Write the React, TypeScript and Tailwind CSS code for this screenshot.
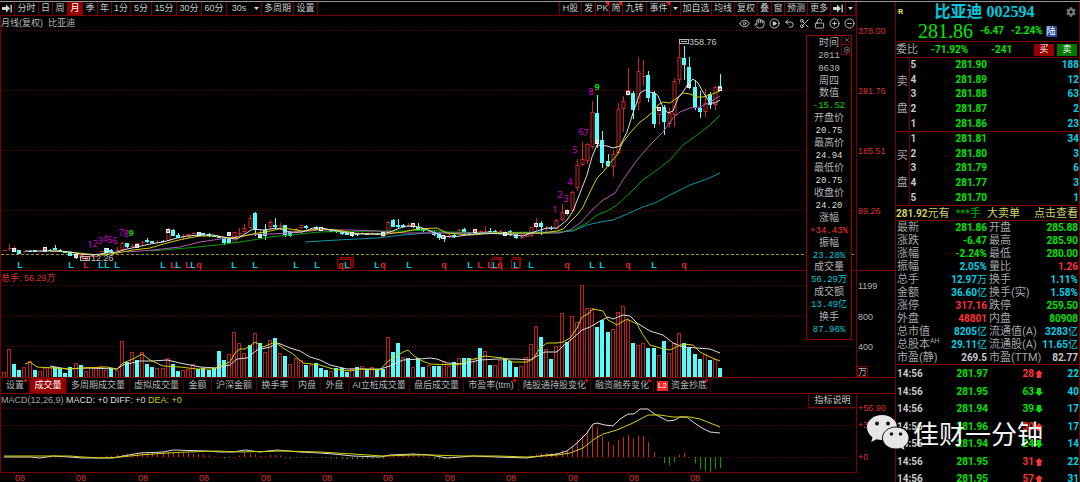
import type { ReactNode } from "react";
import { CircleMinus, CirclePlay, CirclePlus, Eye, Hand, LockOpen, Scissors, Settings, Undo2, X } from "lucide-react";
import { FaCog } from "react-icons/fa";

const STEP = 5.115;
const barX = (i: number) => 4 + STEP * i;

// [direction, high, body top, body bottom, low]
type Candle = [1 | -1, number, number, number, number];

const CANDLES: Candle[] = [
  [1, 250, 250, 252, 252], [1, 244, 248, 249, 251], [1, 246, 248, 252, 252], [-1, 250, 250, 254, 254],
  [1, 251, 251, 253, 254], [-1, 250, 251, 252, 252], [-1, 250, 250, 252, 252], [1, 250, 251, 252, 252],
  [-1, 247, 248, 252, 252], [-1, 249, 250, 251, 251], [-1, 245, 248, 250, 250], [-1, 249, 250, 251, 252],
  [-1, 251, 251, 253, 253], [-1, 252, 252, 256, 256], [-1, 254, 254, 258, 259], [1, 255, 255, 258, 258],
  [1, 256, 257, 260, 260], [1, 255, 256, 258, 258], [1, 254, 254, 257, 257], [1, 251, 251, 253, 254],
  [-1, 248, 248, 253, 253], [-1, 249, 250, 252, 252], [1, 247, 250, 252, 253], [1, 242, 243, 250, 251],
  [-1, 243, 243, 247, 248], [1, 244, 246, 247, 248], [1, 243, 243, 247, 247], [1, 241, 242, 243, 246],
  [-1, 238, 240, 242, 243], [-1, 241, 241, 243, 243], [1, 240, 242, 243, 243], [-1, 240, 241, 242, 242],
  [1, 228, 229, 241, 241], [-1, 229, 230, 236, 236], [-1, 233, 235, 238, 238], [1, 234, 236, 237, 240],
  [1, 234, 234, 237, 238], [1, 232, 233, 235, 236], [1, 232, 232, 236, 236], [-1, 233, 233, 235, 236],
  [-1, 233, 234, 236, 237], [-1, 235, 236, 237, 237], [-1, 236, 236, 238, 238], [-1, 238, 238, 243, 245],
  [-1, 238, 239, 243, 243], [1, 232, 232, 243, 243], [1, 228, 233, 234, 236], [1, 224, 228, 232, 233],
  [1, 215, 218, 228, 229], [-1, 212, 213, 230, 236], [1, 229, 232, 233, 239], [-1, 224, 230, 236, 240],
  [1, 220, 222, 227, 228], [-1, 218, 225, 227, 229], [1, 223, 226, 227, 229], [-1, 225, 225, 236, 237],
  [-1, 231, 232, 236, 237], [1, 228, 229, 233, 233], [1, 225, 225, 228, 229], [-1, 225, 226, 228, 229],
  [1, 228, 229, 230, 230], [-1, 226, 227, 229, 229], [-1, 227, 227, 230, 231], [1, 229, 229, 232, 232],
  [-1, 229, 230, 232, 232], [-1, 230, 231, 232, 233], [-1, 230, 231, 234, 235], [-1, 231, 232, 235, 235],
  [-1, 232, 233, 236, 237], [-1, 233, 233, 235, 236], [1, 232, 233, 234, 234], [-1, 233, 233, 235, 235],
  [1, 232, 233, 234, 235], [-1, 233, 234, 235, 235], [1, 233, 233, 237, 237], [1, 221, 222, 233, 233],
  [-1, 219, 220, 227, 227], [-1, 219, 225, 227, 228], [-1, 224, 225, 227, 227], [1, 223, 225, 226, 227],
  [-1, 223, 224, 227, 228], [-1, 223, 227, 230, 231], [-1, 228, 229, 231, 232], [1, 230, 231, 232, 232],
  [-1, 231, 232, 235, 236], [-1, 232, 233, 238, 240], [-1, 235, 236, 239, 242], [1, 234, 235, 237, 238],
  [-1, 234, 235, 237, 238], [1, 229, 230, 233, 234], [-1, 228, 229, 233, 234], [-1, 232, 233, 234, 234],
  [-1, 229, 231, 233, 234], [1, 230, 231, 232, 233], [1, 226, 231, 232, 233], [-1, 228, 231, 233, 233],
  [-1, 230, 231, 232, 233], [1, 230, 231, 234, 234], [1, 231, 232, 235, 236], [-1, 230, 231, 235, 236],
  [-1, 234, 234, 238, 239], [1, 235, 237, 238, 239], [1, 235, 236, 238, 238], [1, 227, 227, 236, 237],
  [1, 218, 223, 227, 230], [-1, 221, 223, 227, 235], [1, 226, 228, 229, 232], [-1, 226, 228, 229, 230],
  [1, 219, 220, 229, 229], [1, 204, 212, 220, 221], [1, 209, 210, 214, 216], [1, 191, 192, 211, 212],
  [1, 159, 165, 188, 191], [1, 142, 159, 165, 166], [1, 143, 144, 161, 164], [1, 101, 112, 147, 149],
  [-1, 95, 113, 143, 148], [-1, 131, 140, 163, 168], [-1, 154, 161, 166, 167], [1, 150, 154, 167, 177],
  [1, 103, 109, 153, 154], [1, 96, 101, 109, 132], [1, 68, 90, 95, 96], [-1, 91, 93, 110, 119],
  [1, 57, 71, 103, 110], [1, 60, 76, 77, 86], [-1, 71, 75, 98, 102], [-1, 91, 93, 124, 128],
  [1, 107, 110, 115, 125], [-1, 105, 107, 122, 135], [1, 108, 113, 124, 128], [1, 78, 81, 115, 127],
  [1, 42, 57, 80, 84], [-1, 46, 58, 65, 80], [-1, 57, 67, 87, 89], [-1, 80, 87, 108, 110],
  [-1, 91, 108, 112, 118], [1, 89, 103, 112, 117], [-1, 92, 94, 105, 109], [1, 86, 87, 105, 110],
  [-1, 74, 86, 91, 91],
];

// Negative values close down
const VOLUMES = [
  14, 83, -40, -22, 30, 48, -22, 18, 27, 30, -31, -27, -13, -31, 42, -35, 18, 29, 31, 33, 21, -28, 21, 107, -45, 74,
  -52, 76, -40, -29, 28, 26, 57, -39, -18, 22, 24, 39, -24, -26, -20, -28, -78, -51, 70, 135, 102, 72, -96, 132, -101,
  75, 111, -117, 72, -62, 39, 56, 52, -35, 37, -43, -28, -22, 18, -26, -28, -16, 28, -31, 33, -24, 29, -24, -24, 120,
  -76, -102, 59, -58, 30, -56, -31, 37, -32, -34, 48, 34, -44, 58, -56, -58, 54, -86, 78, -37, 36, 52, -58, -48, -29,
  33, 60, 100, 153, -121, 84, -55, 94, 192, -104, 182, 164, 276, 206, 206, -149, -171, -134, 144, 195, 213, 172,
  -103, 97, 101, -86, -87, 66, -108, 72, 102, 132, -103, -87, -68, -55, 68, -51, 54, -27,
];

const MACD_BARS = [
  0, 2, 1, 0, -1, 0, 0, 0, 0, 2, 3, 2, 0, -2, -3, -3, -2, -2, -1, 2, 4, 4, 6, 9, 10, 10, 12, 14, 14, 14, 15, 14, 15, 15,
  14, 14, 12, 10, 9, 8, 5, 2, -2, -5, -3, -2, 5, 12, 10, 8, 3, 2, 7, 6, 5, -3, -5, -3, -2, -2, -2, -2, -2, -3, -4, -5,
  -7, -7, -7, -7, -6, -5, -5, -4, -5, 2, 4, 5, 6, 7, 8, 5, 3, -2, -6, -7, -7, -6, -5, -2, -1, 1, 2, 2, -2, 2, 1, 2,
  -2, -2, -3, -2, 2, 5, 9, 11, 12, 10, 14, 20, 22, 32, 52, 66, 80, 96, 89, 62, 46, 35, 52, 60, 66, 56, 64, 64, 45, 15,
  -2, -18, -26, -15, 7, 12, -2, -20, -36, -41, -44, -36, -34,
];

const MA5 =
  "25,251 43,251 60,251 70,252 80,254 93,255 107,253 117,252 127,249 137,247 150,244 163,242 177,238 187,236 200,235 213,235 227,238 237,239 243,235 253,229 263,230 277,228 290,232 302,232 313,228 322,228 337,231 350,234 370,234 382,234 390,232 400,228 408,226 420,227 433,232 443,236 453,237 467,235 483,233 503,234 523,236 537,231 547,228 557,228 567,220 573,211 580,193 587,175 592,157 597,145 607,146 613,148 620,146 627,132 633,113 640,93 645,90 650,92 655,93 658,96 663,107 668,113 673,111 678,98 683,92 688,84 693,79 698,83 703,92 710,103 715,103 720,100";
const MA10 =
  "50,251 70,252 87,254 103,255 117,253 133,250 150,248 167,243 183,239 200,236 217,236 230,238 240,237 253,234 270,231 283,228 303,231 320,229 337,230 353,233 370,234 387,234 403,232 417,229 437,228 447,233 470,235 497,233 520,233 543,233 557,231 563,229 570,222 577,215 583,207 590,192 597,178 603,172 610,163 617,155 623,142 630,133 640,122 647,117 655,110 658,105 663,102 670,103 677,98 683,93 690,94 697,97 703,97 710,95 720,91";
const MA20 =
  "127,252 153,250 180,247 200,242 227,238 247,235 270,234 290,233 320,230 350,230 377,231 403,233 427,233 457,233 487,233 523,234 547,233 560,233 570,230 580,223 592,210 603,200 615,193 623,180 637,160 650,145 663,132 673,118 680,112 690,108 700,107 710,102 720,96";
const MA30 =
  "150,251 187,248 217,245 247,241 270,237 290,235 320,232 377,231 403,231 427,230 450,232 503,233 553,233 573,230 587,223 597,215 607,211 617,205 630,193 643,180 657,170 670,160 683,145 697,135 710,125 720,115";
const MA60 =
  "305,242 337,240 377,238 403,235 427,233 560,232 573,231 587,225 600,222 613,220 627,214 643,207 657,202 670,195 690,185 707,179 720,173";

const VOL_MA5 =
  "25,364 30,362 37,367 53,368 70,369 80,368 107,367 117,369 123,363 133,359 142,354 150,360 163,366 180,367 197,369 213,369 220,366 230,362 235,353 240,349 245,349 250,346 255,342 263,347 275,342 283,348 293,354 303,363 320,365 333,369 350,371 360,369 380,370 387,362 395,357 403,352 408,350 413,355 420,360 430,364 457,365 470,360 485,356 503,358 513,362 527,362 533,359 540,348 547,343 557,343 563,342 570,338 577,328 582,317 588,314 593,309 603,311 608,320 617,325 627,319 637,324 643,335 650,345 660,348 670,350 683,344 693,345 700,352 710,357 720,361";
const VOL_MA10 =
  "50,366 67,369 87,368 117,369 123,365 140,361 153,361 167,360 180,363 200,367 217,368 230,365 237,359 247,358 257,350 270,347 278,343 290,348 300,351 310,357 320,360 330,365 347,369 380,369 390,366 403,360 420,359 430,358 437,359 447,363 463,364 480,360 497,359 517,359 530,360 537,356 545,352 557,352 563,346 573,338 582,330 590,327 600,321 608,317 613,319 623,315 630,316 637,323 650,331 663,335 673,343 683,347 697,348 710,349 720,353";

const DIFF =
  "4,457 30,457 40,458 53,456 70,457 82,458 93,458 113,458 123,456 140,453 163,452 173,450 207,451 220,452 233,452 245,450 260,452 277,450 300,452 320,453 333,454 353,456 380,457 390,455 413,454 430,455 447,458 473,456 497,457 527,458 547,455 557,454 567,451 577,443 587,433 593,424 597,423 605,425 613,426 620,419 628,414 634,414 640,409 648,409 653,413 660,417 668,421 675,420 680,417 687,417 693,422 702,428 710,432 720,433";
const DEA =
  "4,456 70,456 83,457 103,458 120,457 140,455 167,453 187,452 217,451 240,452 283,451 320,452 353,454 383,456 413,455 430,455 463,456 497,456 527,457 557,455 570,453 583,448 593,440 603,434 617,430 633,423 648,415 660,415 673,417 690,417 700,419 710,423 720,427";

const MARKS: [number, "L" | "q", "c" | "r"][] = [
  [20, "L", "c"], [71, "L", "c"], [86, "L", "r"], [101, "L", "c"], [107, "L", "c"], [117, "L", "c"],
  [163, "L", "c"], [173, "L", "r"], [178, "L", "c"], [188, "L", "r"], [193, "L", "c"], [199, "q", "r"],
  [234, "L", "c"], [255, "L", "c"], [296, "L", "c"], [317, "L", "c"], [341, "q", "r"], [347, "L", "c"],
  [377, "L", "c"], [383, "q", "r"], [409, "L", "c"], [444, "q", "r"], [470, "L", "c"], [480, "L", "r"],
  [490, "L", "r"], [495, "L", "c"], [500, "q", "r"], [516, "L", "c"], [531, "L", "c"], [567, "q", "r"],
  [592, "L", "c"], [602, "L", "c"], [628, "q", "r"], [654, "L", "c"], [684, "q", "r"],
];

const COUNTS: [number, number, number][] = [
  [1, 90, 248], [2, 95, 247], [3, 100, 244], [4, 105, 242], [5, 110, 243], [6, 115, 244], [7, 121, 236],
  [8, 126, 237], [9, 131, 236], [1, 555, 213], [2, 560, 198], [3, 566, 202], [4, 570, 185], [5, 575, 153],
  [6, 581, 135], [7, 586, 136], [8, 591, 95], [9, 597, 90],
];

const SQUARES: [number, number][] = [
  [14, 250], [45, 249], [76, 256], [107, 250], [137, 246], [168, 231], [199, 234], [229, 234], [260, 236],
  [321, 229], [352, 234], [383, 234], [413, 225], [443, 237], [475, 231], [505, 234], [536, 225], [567, 212],
  [597, 142], [628, 93], [659, 109], [689, 86], [720, 89],
];

const YEARS = Array.from({ length: 12 }, (_, i) => 15 + Math.round(61.4 * i));

const PERIODS = [
  { label: "分时", cls: "w-[24px]" },
  { label: "日", cls: "w-[14px]" },
  { label: "周", cls: "w-[15px]" },
  { label: "月", cls: "w-[15px] bg-[#960000] text-white" },
  { label: "季", cls: "w-[15px]" },
  { label: "年", cls: "w-[14px]" },
  { label: "1分", cls: "w-[19px]" },
  { label: "5分", cls: "w-[21px]" },
  { label: "15分", cls: "w-[25px]" },
  { label: "30分", cls: "w-[25px]" },
  { label: "60分", cls: "w-[25px]" },
  { label: "30s", cls: "w-[24px] border-r-0" },
  { label: "▾", cls: "w-[11px]" },
  { label: "多周期", cls: "w-[32px]" },
  { label: "设置", cls: "w-[24px]" },
];

const TOOLS = [
  { label: "H股", cls: "w-[22px]" },
  { label: "发", cls: "w-[14px]" },
  { label: "PK", cls: "w-[14px]", hot: true },
  { label: "简", cls: "w-[13px]", hot: true },
  { label: "九转", cls: "w-[24px]" },
  { label: "事件", cls: "w-[24px]", hot: true },
  { label: "▾", cls: "w-[10px]" },
  { label: "加自选", cls: "w-[31px]" },
  { label: "均线", cls: "w-[23px]" },
  { label: "复权", cls: "w-[23px]" },
  { label: "叠", cls: "w-[14px]" },
  { label: "窗", cls: "w-[13px]" },
  { label: "预测", cls: "w-[23px]" },
  { label: "更多", cls: "w-[23px]" },
  { label: "→", cls: "w-[15px]" },
  { label: "▾", cls: "w-[10px]" },
];

const INDICATORS = [
  { label: "设置", cls: "w-[29px]", dot: true },
  { label: "成交量", cls: "w-[37px] bg-[#960000] text-white" },
  { label: "多周期成交量", cls: "w-[63px]" },
  { label: "虚拟成交量", cls: "w-[54px]" },
  { label: "金额", cls: "w-[28px]" },
  { label: "沪深金额", cls: "w-[45px]" },
  { label: "换手率", cls: "w-[37px]" },
  { label: "内盘", cls: "w-[27px]" },
  { label: "外盘", cls: "w-[28px]" },
  { label: "AI立桩成交量", cls: "w-[61px]" },
  { label: "盘后成交量", cls: "w-[54px]" },
  { label: "市盈率(ttm)", cls: "w-[55px]", dot: true },
  { label: "陆股通持股变化", cls: "w-[72px]", dot: true },
  { label: "融资融券变化", cls: "w-[63px]", dot: true },
  { label: "资金抄底", cls: "w-[57px]", dot: true, level2: true },
];

const INFO: [string, string, string][] = [
  ["数值", "-15.52", "text-[#00dc00]"],
  ["开盘价", "20.75", "text-[#dcdcdc]"],
  ["最高价", "24.94", "text-[#dcdcdc]"],
  ["最低价", "20.75", "text-[#dcdcdc]"],
  ["收盘价", "24.20", "text-[#dcdcdc]"],
  ["涨幅", "+34.43%", "text-[#ff3232]"],
  ["振幅", "23.28%", "text-[#00c8dc]"],
  ["成交量", "56.29万", "text-[#00c8dc]"],
  ["成交额", "13.49亿", "text-[#00c8dc]"],
  ["换手", "87.96%", "text-[#00c8dc]"],
];

const ASKS: [number, string, number][] = [
  [5, "281.90", 188],
  [4, "281.89", 12],
  [3, "281.88", 63],
  [2, "281.87", 2],
  [1, "281.86", 23],
];

const BIDS: [number, string, number][] = [
  [1, "281.81", 34],
  [2, "281.80", 3],
  [3, "281.79", 6],
  [4, "281.77", 3],
  [5, "281.70", 1],
];

const GREEN = "text-[#00e600]";
const RED = "text-[#ff3232]";
const CYAN = "text-[#00d2e6]";
const GREY = "text-[#c8c8c8]";

const STATS: [string, string, string, string, string, string][] = [
  ["最新", "281.86", GREEN, "开盘", "285.88", GREEN],
  ["涨跌", "-6.47", GREEN, "最高", "285.90", GREEN],
  ["涨幅", "-2.24%", GREEN, "最低", "280.00", GREEN],
  ["振幅", "2.05%", CYAN, "量比", "1.26", RED],
  ["总手", "12.97万", CYAN, "换手", "1.11%", CYAN],
  ["金额", "36.60亿", CYAN, "换手(实)", "1.58%", CYAN],
  ["涨停", "317.16", RED, "跌停", "259.50", GREEN],
  ["外盘", "48801", RED, "内盘", "80908", GREEN],
  ["总市值", "8205亿", CYAN, "流通值(A)", "3283亿", CYAN],
  ["总股本", "29.11亿", CYAN, "流通股(A)", "11.65亿", CYAN],
  ["市盈(静)", "269.5", GREY, "市盈(TTM)", "82.77", GREY],
];

const TRADES: [string, string, number, boolean, number][] = [
  ["14:56", "281.97", 28, true, 22],
  ["14:56", "281.95", 63, false, 40],
  ["14:56", "281.94", 39, false, 17],
  ["14:56", "281.96", 30, true, 17],
  ["14:56", "281.94", 24, false, 14],
  ["14:56", "281.95", 31, true, 22],
  ["14:56", "281.95", 57, true, 31],
];

function JumpIcon() {
  return (
    <svg width="10" height="9" viewBox="0 0 10 9" fill="#d2d2d2">
      <path d="M0 3h4V0.5L8 4.5L4 8.5V6H0z M8.5 0.5h1.3v8H8.5z" />
    </svg>
  );
}

function BarButton({ label, cls, hot }: { label: string; cls: string; hot?: boolean }) {
  return (
    <button
      type="button"
      aria-label={label === "→" ? "前进" : label === "▾" ? "展开" : undefined}
      className={`relative flex h-full shrink-0 items-center justify-center border-r border-[#780000] whitespace-nowrap ${cls}`}
    >
      {label === "▾" ? (
        <svg width="5" height="3" viewBox="0 0 5 3">
          <path d="M0 0h5L2.5 3z" fill="#d2d2d2" />
        </svg>
      ) : label === "→" ? (
        <JumpIcon />
      ) : (
        label
      )}
      {hot && (
        <svg className="absolute top-0 right-0" width="4" height="4" viewBox="0 0 4 4">
          <path d="M0 0h4v4z" fill="#ff1e1e" />
        </svg>
      )}
    </button>
  );
}

function Toolbar() {
  return (
    <div className="mr-[38px] flex h-[14px] border-r border-b border-[#780000] text-[9px] leading-none text-[#c8c8c8]">
      <BarButton label="→" cls="w-[15px]" />
      {PERIODS.map((p) => (
        <BarButton key={p.label} {...p} />
      ))}
      <div className="flex-1 border-r border-[#780000]" />
      {TOOLS.map((t, i) => (
        <BarButton key={i} {...t} />
      ))}
    </div>
  );
}

function Grid({ rows }: { rows: number[] }) {
  return (
    <>
      {rows.map((y) => (
        <line key={y} x1="1" x2="100%" y1={y + 0.5} y2={y + 0.5} stroke="#6e0000" strokeDasharray="1 2" />
      ))}
    </>
  );
}

function Line({ points, color }: { points: string; color: string }) {
  return <polyline points={points} fill="none" stroke={color} strokeWidth="1" />;
}

function Pane({ top, children, axis }: { top: number; children: ReactNode; axis: ReactNode }) {
  return (
    <div className="flex h-full">
      <svg className="h-full min-w-0 flex-1 border-x border-[#780000]" role="img">
        <g transform={`translate(-1,${-top})`}>{children}</g>
      </svg>
      <svg className="h-full w-[38px] font-['Liberation_Sans','Noto_Sans_CJK_SC',sans-serif] text-[9px]">
        <g transform={`translate(0,${-top})`}>{axis}</g>
      </svg>
    </div>
  );
}

function PriceChart() {
  return (
    <Pane
      top={16}
      axis={
        <g fill="#dc3232">
          <text x="1" y="34">378.00</text>
          <text x="1" y="94">281.76</text>
          <text x="1" y="154">185.51</text>
          <text x="1" y="214">89.26</text>
        </g>
      }
    >
      <Grid rows={[30, 90, 150, 210]} />
      <line x1="1" x2="100%" y1="254.5" y2="254.5" stroke="#a0961e" strokeWidth="1" strokeDasharray="3 2" />
      {CANDLES.map(([dir, high, top, bottom, low], i) => {
        const x = Math.round(barX(i));
        const h = Math.max(bottom - top, 1);
        return dir > 0 ? (
          <g key={i} stroke="#c82828">
            <path d={`M${x + 0.5} ${high}V${top}M${x + 0.5} ${bottom}V${low}`} />
            {h > 2 ? (
              <rect x={x - 1} y={top + 0.5} width="3" height={h - 1} fill="#000" />
            ) : (
              <path d={`M${x - 1} ${top + 0.5}h4`} />
            )}
          </g>
        ) : (
          <g key={i} fill="#54fcfc">
            <rect x={x} y={high} width="1" height={low - high} />
            <rect x={x - 2} y={top} width="4" height={h} />
          </g>
        );
      })}
      <Line points={MA60} color="#0a96a5" />
      <Line points={MA30} color="#00a000" />
      <Line points={MA20} color="#b45ab4" />
      <Line points={MA10} color="#d2d200" />
      <Line points={MA5} color="#dcdcdc" />
      {SQUARES.map(([x, y]) => (
        <g key={x}>
          <rect x={x - 2} y={y - 2} width="4" height="4" fill="#f0f0f0" />
          <rect x={x - 1} y={y - 1} width="2" height="2" fill={y % 2 ? "#e66464" : "#96e6e6"} />
        </g>
      ))}

      <g className="font-['Noto_Sans',sans-serif] text-[9px]" textAnchor="middle">
        {COUNTS.map(([n, x, y]) => (
          <text key={x} x={x} y={y} fill={n === 9 ? "#00dc00" : "#d200d2"} fontWeight={n === 9 ? 700 : 400}>
            {n}
          </text>
        ))}
      </g>

      {/* high / low tags */}
      <g fill="none" stroke="#b4b4b4">
        <rect x="679.5" y="39.5" width="9" height="4" />
        <path d="M681 41.5h6" />
        <rect x="80.5" y="256.5" width="9" height="4" />
        <path d="M82 258.5h6" />
      </g>
      <g className="font-['Liberation_Sans',sans-serif] text-[9px]" fill="#c8c8c8">
        <text x="689" y="45">358.76</text>
        <text x="91" y="261">12.26</text>
      </g>

      <g fill="#500000" stroke="#a00000">
        <rect x="340.5" y="257.5" width="13" height="10" />
        <rect x="337.5" y="259.5" width="13" height="9" fill="#000" />
        <rect x="493.5" y="257.5" width="8" height="10" />
        <rect x="491.5" y="259.5" width="8" height="9" fill="#000" />
        <rect x="513.5" y="257.5" width="7" height="10" />
        <rect x="511.5" y="259.5" width="8" height="9" fill="#000" />
      </g>
      <g className="font-['Liberation_Sans',sans-serif] text-[9px] font-bold" textAnchor="middle">
        {MARKS.map(([x, t, c]) => (
          <text key={x} x={x} y="268" fill={c === "c" ? "#00c8dc" : "#dc2828"}>
            {t}
          </text>
        ))}
      </g>
    </Pane>
  );
}

function VolumeChart() {
  return (
    <Pane
      top={271}
      axis={
        <g fill="#b4b4b4">
          <text x="1" y="289">1199</text>
          <text x="1" y="320">800</text>
          <text x="1" y="350">400</text>
          <rect x="0.5" y="366.5" width="10" height="10" fill="none" stroke="#780000" />
          <text x="1" y="375">万</text>
        </g>
      }
    >
      <Grid rows={[285, 316, 346]} />
      {VOLUMES.map((v, i) => {
        const x = Math.round(barX(i));
        const h = Math.round(Math.abs(v) / 3);
        return v > 0 ? (
          <rect key={i} x={x - 1.5} y={377.5 - h} width="3" height={h} fill="#100" stroke="#b42323" />
        ) : (
          <rect key={i} x={x - 2} y={377 - h} width="4" height={h} fill="#54fcfc" />
        );
      })}
      <Line points={VOL_MA10} color="#dcdcdc" />
      <Line points={VOL_MA5} color="#d2d200" />
    </Pane>
  );
}

function MacdChart() {
  return (
    <Pane
      top={394}
      axis={
        <g fill="#dc3232">
          <text x="1" y="411">+56.90</text>
          <text x="1" y="428">+37.90</text>
          <text x="1" y="460">+0</text>
        </g>
      }
    >
      <Grid rows={[408, 425, 457]} />
      {MACD_BARS.map((v, i) => {
        const x = Math.round(barX(i));
        const h = Math.abs(v) / 3;
        return (
          <rect
            key={i}
            x={x}
            y={v > 0 ? 457 - h : 457}
            width="1"
            height={h}
            fill={v > 0 ? "#c82828" : "#00a000"}
          />
        );
      })}
      <Line points={DIFF} color="#dcdcdc" />
      <Line points={DEA} color="#d2d200" />
    </Pane>
  );
}

function ChartTools() {
  const icons: [string, typeof Eye, string][] = [
    ["显示", Eye, ""],
    ["拖动", Hand, ""],
    ["播放", CirclePlay, "[&>path]:fill-current"],
    ["撤销", Undo2, ""],
    ["剪切", Scissors, ""],
    ["锁定", LockOpen, ""],
    ["放大", CirclePlus, ""],
    ["缩小", CircleMinus, ""],
  ];
  return (
    <div className="absolute top-[2px] right-[38px] flex text-[#c8c8c8]">
      {icons.map(([name, Icon, cls]) => (
        <button key={name} type="button" aria-label={name} className="flex w-[15px] justify-center">
          <Icon size={11} strokeWidth={2} className={cls} />
        </button>
      ))}
    </div>
  );
}

function InfoPanel() {
  return (
    <div className="absolute top-[33px] right-[43px] w-[46px] border border-[#a00000] bg-black py-[2px] font-['Liberation_Mono','Noto_Sans_CJK_SC',monospace] text-[9px] leading-none">
      <div className="absolute top-0 right-0 border-b border-l border-[#780000] text-[#8c8c8c]">
        <button type="button" aria-label="关闭" className="flex size-[9px] items-center justify-center border-b border-[#780000]">
          <X size={8} />
        </button>
        <button type="button" aria-label="面板设置" className="flex size-[9px] items-center justify-center">
          <Settings size={8} />
        </button>
      </div>
      <dl className="grid h-[299px] grid-rows-[repeat(24,minmax(0,1fr))] items-center text-center whitespace-nowrap text-[#b4b4b4]">
        <dt className="text-[10px]">时间</dt>
        <dd>2011</dd>
        <dd>0630</dd>
        <dd className="text-[10px]">周四</dd>
        {INFO.map(([label, value, color]) => (
          <div key={label} className="contents">
            <dt className="text-[10px]">{label}</dt>
            <dd className={color}>{value}</dd>
          </div>
        ))}
      </dl>
    </div>
  );
}

function IndicatorTabs() {
  return (
    <div className="flex h-[16px] border-b border-l border-[#780000] text-[9px] leading-none text-[#b4b4b4]">
      {INDICATORS.map((t) => (
        <button
          key={t.label}
          type="button"
          className={`relative flex h-full shrink-0 items-center justify-center gap-[3px] border-r border-[#500000] whitespace-nowrap ${t.cls}`}
        >
          {t.level2 && <span className="bg-[#f02828] px-px py-px text-[8px] text-white">L2</span>}
          {t.label}
          {t.dot && <span className="absolute top-[1px] right-[2px] size-[3px] rounded-full bg-[#ff0000]" />}
        </button>
      ))}
    </div>
  );
}

function DateAxis() {
  return (
    <svg className="h-[12px] w-full font-['Liberation_Sans',sans-serif] text-[9px]" fill="#dc3232">
      {YEARS.map((x) => (
        <g key={x}>
          <rect x={x - 1} y="0" width="1" height="2" fill="#780000" />
          <text x={x} y="8">08</text>
        </g>
      ))}
    </svg>
  );
}

function OrderBook({ side, rows }: { side: string; rows: [number, string, number][] }) {
  return (
    <table aria-label={`${side}盘`} className="h-[74px] w-full table-fixed border-b border-[#780000] text-[10px] leading-none font-bold">
      <tbody>
        {rows.map(([level, price, qty], i) => (
          <tr key={level}>
            {i === 0 && (
              <th rowSpan={5} className="w-[13px] border-r border-[#780000] text-[11px] font-normal text-[#a5a5a5]">
                <div className="flex flex-col items-center gap-4">
                  <span>{side}</span>
                  <span>盘</span>
                </div>
              </th>
            )}
            <td className="w-[16px] pl-px text-[#c8c8c8]">{level}</td>
            <td className="w-[62px] text-right text-[#00e600]">{price}</td>
            <td className="text-right text-[#00d2e6]">{qty}</td>
          </tr>
        ))}
      </tbody>
    </table>
  );
}

function Amount({ value }: { value: string }) {
  const unit = value.match(/[万亿]$/)?.[0];
  if (!unit) return <>{value}</>;
  return (
    <>
      {value.slice(0, -1)}
      <span className="font-normal">{unit}</span>
    </>
  );
}

function StatsTable() {
  return (
    <table className="w-full table-fixed border-b border-[#780000] text-[10px] leading-[13px] whitespace-nowrap">
      <tbody>
        {STATS.map(([l1, v1, c1, l2, v2, c2]) => (
          <tr key={l1} className="h-[13px]">
            <th className="w-[40px] pl-px text-left text-[11px] font-normal text-[#a5a5a5]">
              {l1}
              {l1 === "总股本" && <span className="align-top text-[7px] leading-none">AH</span>}
            </th>
            <td className={`w-[51px] text-right font-bold ${c1}`}>
              <Amount value={v1} />
            </td>
            <th className="w-[48px] pl-[2px] text-left text-[11px] font-normal text-[#a5a5a5]">{l2}</th>
            <td className={`pr-px text-right font-bold ${c2}`}>
              <Amount value={v2} />
            </td>
          </tr>
        ))}
      </tbody>
    </table>
  );
}

function TradeArrow({ up }: { up: boolean }) {
  return (
    <svg width="8" height="8" viewBox="0 0 8 8" fill={up ? "#ff3232" : "#00e600"}>
      <path d={up ? "M4 0L8 4H6V8H2V4H0z" : "M4 8L8 4H6V0H2V4H0z"} />
    </svg>
  );
}

function TradeTable() {
  return (
    <table className="w-full table-fixed text-[10px] leading-none font-bold">
      <tbody>
        {TRADES.map(([time, price, qty, up, count], i) => (
          <tr key={i} className="odd:h-[18px] even:h-[17px]">
            <td className="w-[40px] pl-px text-[#c8c8c8]">{time}</td>
            <td className="w-[52px] text-right text-[#00e600]">{price}</td>
            <td className={`w-[55px] ${up ? "text-[#ff3232]" : "text-[#00e600]"}`}>
              <span className="flex items-center justify-end gap-px">
                {qty}
                <TradeArrow up={up} />
              </span>
            </td>
            <td className="text-right text-[#00d2e6]">{count}</td>
          </tr>
        ))}
      </tbody>
    </table>
  );
}

function QuotePanel() {
  return (
    <aside className="w-[185px] shrink-0 overflow-hidden border-x border-[#780000] font-['Roboto','Noto_Sans_CJK_SC',sans-serif]">
      <header className="h-[40px] border-b border-[#780000]">
        <div className="flex h-[19px] items-center justify-between pr-[3px] pl-[2px]">
          <span className="text-[8px] font-bold text-[#e6e650]">R</span>
          <h1 className="font-['Liberation_Serif','Noto_Sans_CJK_SC',serif] text-[16px] leading-none font-bold whitespace-nowrap text-[#00c8dc]">
            比亚迪 002594
          </h1>
          <button type="button" aria-label="行情设置" className="text-[#787878]">
            <FaCog size={10} />
          </button>
        </div>
        <div className="flex h-[20px] items-center gap-[7px] pl-[22px] text-[10px] leading-none font-bold text-[#00e600]">
          <span className="font-['Liberation_Serif',serif] text-[20px] font-normal">281.86</span>
          <span>-6.47</span>
          <span>-2.24%</span>
          <span className="-ml-1 bg-[#2850a0] p-px text-[9px] font-normal text-white">陆</span>
        </div>
      </header>

      <div className="flex h-[16px] items-center border-b border-[#780000] pr-[2px] text-[10px] leading-none font-bold text-[#00e600]">
        <span className="w-[35px] text-[11px] font-normal text-[#a5a5a5]">委比</span>
        <span className="w-[60px]">-71.92%</span>
        <span className="flex-1">-241</span>
        <button type="button" className="mr-[3px] h-[12px] w-[20px] bg-[#960000] text-[9px] leading-none font-normal text-white">
          买
        </button>
        <button type="button" className="h-[12px] w-[20px] bg-[#007800] text-[9px] leading-none font-normal text-white">
          卖
        </button>
      </div>

      <OrderBook side="卖" rows={ASKS} />
      <OrderBook side="买" rows={BIDS} />

      <a
        href="#big-orders"
        className="flex h-[15px] items-center justify-between border-b border-[#780000] pr-px text-[11px] leading-none whitespace-nowrap text-[#d2d264]"
      >
        <span>
          <b className="text-[10px]">281.92</b>元有
        </span>
        <span className="text-[#00b400]">***手</span>
        <span>大卖单</span>
        <span className="pl-2">点击查看</span>
      </a>

      <StatsTable />
      <TradeTable />
    </aside>
  );
}

function Watermark() {
  return (
    <div className="pointer-events-none absolute right-[37px] bottom-[31px] flex items-center gap-[4px]">
      <svg width="42" height="36" viewBox="0 0 42 36">
        <path
          d="M15 0C6.500 0 0 5.500 0 12.500c0 4 2.200 7.300 5.500 9.700L4.200 27l5.300-2.700c1.800.5 3.600.7 5.500.7 8.500 0 15-5.500 15-12.500S23.500 0 15 0z"
          fill="#e6e6e6"
        />
        <path
          d="M29 12C21.300 12 15.500 17 15.500 23S21.300 34 29 34c1.700 0 3.200-.2 4.700-.7L38 35.500l-1-3.800c3-2 5-5.200 5-8.700 0-6-5.500-11-13-11z"
          fill="#e6e6e6"
          stroke="#141414"
          strokeWidth="1"
        />
        <g fill="#141414">
          <circle cx="10" cy="8.500" r="2" />
          <circle cx="21" cy="8.500" r="2" />
          <circle cx="24.500" cy="19" r="1.800" />
          <circle cx="33.500" cy="19" r="1.800" />
        </g>
      </svg>
      <span className="font-['Noto_Sans_CJK_SC',sans-serif] text-[26px] leading-none text-[#f5f5f5]">佳财一分钟</span>
    </div>
  );
}

export default function App() {
  return (
    <div className="relative flex h-screen flex-col overflow-hidden bg-black font-['Liberation_Sans','Noto_Sans_CJK_SC',sans-serif]">
      <div className="mt-px h-px shrink-0 bg-[#969696]" />
      <div className="flex min-h-0 flex-1">
        <main className="relative min-w-0 flex-1 overflow-hidden">
          <Toolbar />
          <section className="relative h-[255px] border-b border-[#780000]">
            <PriceChart />
            <h2 className="absolute top-px left-px text-[9px] leading-[12px] text-[#b4b4b4]">月线(复权)&nbsp; 比亚迪</h2>
            <ChartTools />
          </section>
          <section className="relative h-[107px] border-b border-[#780000]">
            <VolumeChart />
            <h2 className="absolute top-px left-px text-[9px] leading-[12px] text-[#dc3232]">总手: 56.29万</h2>
          </section>
          <IndicatorTabs />
          <section className="relative h-[79px]">
            <MacdChart />
            <h2 className="absolute top-0 left-px text-[9px] leading-[13px] text-[#a5a5a5]">
              MACD(12,26,9) <span className="text-[#dcdcdc]">MACD: +0 DIFF: +0</span>{" "}
              <span className="text-[#d2d200]">DEA: +0</span>
            </h2>
            <button
              type="button"
              className="absolute top-0 right-[38px] h-[14px] w-[49px] border-x border-b border-[#780000] bg-black text-[9px] leading-none text-[#c8c8c8]"
            >
              指标说明
            </button>
            <div className="absolute right-[38px] bottom-0 left-0 border-b border-[#780000]" />
          </section>
          <DateAxis />
          <InfoPanel />
        </main>
        <QuotePanel />
      </div>
      <Watermark />
    </div>
  );
}
